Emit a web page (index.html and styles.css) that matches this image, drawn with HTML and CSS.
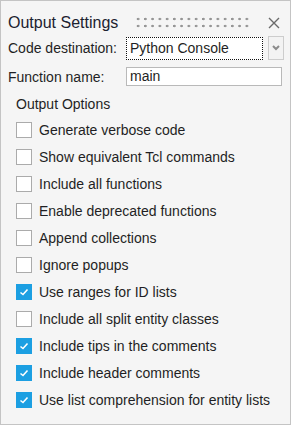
FILE: index.html
```html
<!DOCTYPE html>
<html lang="en">
<head>
    <meta charset="UTF-8">
    <meta name="viewport" content="width=device-width, initial-scale=1.0">
    <title>Output Settings</title>
    <link rel="stylesheet" href="styles.css">
</head>
<body>
    <div class="panel">
        <div class="panel__header">
            <span class="panel__title">Output Settings</span>
            <span class="panel__grip"></span>
            <button class="panel__close" title="Close">
                <svg width="12" height="12" viewBox="0 0 12 12"><path d="M1 1 L11 11 M11 1 L1 11" stroke="#6b6b6b" stroke-width="1.4" fill="none"/></svg>
            </button>
        </div>

        <div class="field">
            <label class="field__label">Code destination:</label>
            <div class="select">Python Console</div>
            <button class="select__button">
                <svg width="8" height="6" viewBox="0 0 8 6"><path d="M1 1 L4 4 L7 1" stroke="#8c8c8c" stroke-width="2" fill="none"/></svg>
            </button>
        </div>

        <div class="field field--name">
            <label class="field__label">Function name:</label>
            <div class="input">main</div>
        </div>

        <div class="options">
            <div class="options__heading">Output Options</div>
            <ul class="options__list">
                <li class="option"><span class="option__box"></span>Generate verbose code</li>
                <li class="option"><span class="option__box"></span>Show equivalent Tcl commands</li>
                <li class="option"><span class="option__box"></span>Include all functions</li>
                <li class="option"><span class="option__box"></span>Enable deprecated functions</li>
                <li class="option"><span class="option__box"></span>Append collections</li>
                <li class="option"><span class="option__box"></span>Ignore popups</li>
                <li class="option is-checked"><span class="option__box"><svg width="16" height="16" viewBox="0 0 16 16"><path d="M4.5 8.5 L7 10.5 L11.5 5.5" stroke="#fff" stroke-width="1.6" fill="none"/></svg></span>Use ranges for ID lists</li>
                <li class="option"><span class="option__box"></span>Include all split entity classes</li>
                <li class="option is-checked"><span class="option__box"><svg width="16" height="16" viewBox="0 0 16 16"><path d="M4.5 8.5 L7 10.5 L11.5 5.5" stroke="#fff" stroke-width="1.6" fill="none"/></svg></span>Include tips in the comments</li>
                <li class="option is-checked"><span class="option__box"><svg width="16" height="16" viewBox="0 0 16 16"><path d="M4.5 8.5 L7 10.5 L11.5 5.5" stroke="#fff" stroke-width="1.6" fill="none"/></svg></span>Include header comments</li>
                <li class="option is-checked"><span class="option__box"><svg width="16" height="16" viewBox="0 0 16 16"><path d="M4.5 8.5 L7 10.5 L11.5 5.5" stroke="#fff" stroke-width="1.6" fill="none"/></svg></span>Use list comprehension for entity lists</li>
            </ul>
        </div>
    </div>
</body>
</html>
```

FILE: styles.css
```css
html, body { margin: 0; padding: 0; }
body { font-family: "Liberation Sans", Arial, sans-serif; font-size: 14px; color: #1f1f24; background: #f5f5f5; }

.panel { width: 291px; height: 425px; box-sizing: border-box; border: 1px solid #c4c4c4; background: #f5f5f5; padding: 12px 0 0 7px; }

.panel__header { display: flex; align-items: center; height: 20px; }
.panel__title { flex: 0 0 127px; font-size: 16px; line-height: 20px; color: #1c2230; }
/* two rows of grip dots */
.panel__grip { width: 116px; height: 14px; background-image: radial-gradient(circle at 3px 3px, #959595 1.1px, transparent 1.6px); background-size: 7.25px 7px; }
.panel__close { margin-left: 17px; width: 12px; height: 12px; padding: 0; border: 0; background: transparent; display: flex; }

.field { display: flex; align-items: center; margin-top: 3px; height: 24px; }
.field__label { flex: 0 0 118px; line-height: 16px; }
.select { width: 137px; height: 23px; box-sizing: border-box; border: 1px dotted #111; background: #fff; padding-left: 3px; line-height: 21px; }
.select__button { margin-left: 5px; width: 16px; height: 24px; box-sizing: border-box; border: 1px solid #cdcdcd; background: #f3f3f3; padding: 0; display: flex; align-items: center; justify-content: center; }

.field--name { margin-top: 7px; height: 19px; }
.input { width: 156px; height: 19px; box-sizing: border-box; border: 1px solid #b9b9b9; background: #fff; padding-left: 3px; line-height: 17px; }

.options { margin: 10px 0 0 8px; }
.options__heading { line-height: 16px; }
.options__list { list-style: none; margin: 10px 0 0; padding: 0; display: flex; flex-direction: column; gap: 11px; }
.option { display: flex; align-items: center; height: 16px; line-height: 16px; }
.option__box { flex: 0 0 16px; width: 16px; height: 16px; box-sizing: border-box; border: 1px solid #ababab; background: #fff; margin-right: 7px; display: flex; }
.option.is-checked .option__box { border-color: #1c9fe2; background: #1c9fe2; }
.option__box svg { margin: -1px; }
```
